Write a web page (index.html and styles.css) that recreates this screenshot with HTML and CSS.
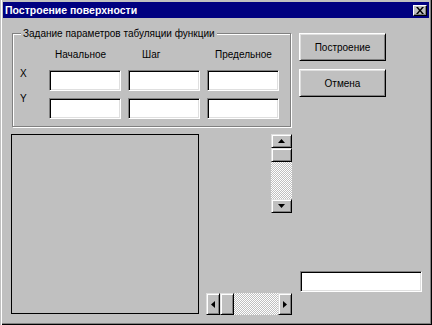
FILE: index.html
```html
<!DOCTYPE html>
<html lang="ru">
<head>
<meta charset="utf-8">
<title>Построение поверхности</title>
<link rel="stylesheet" href="styles.css">
</head>
<body>
<div class="window">
  <div class="titlebar">
    <span class="title">Построение поверхности</span>
    <button class="close" aria-label="Закрыть"><svg width="8" height="7" viewBox="0 0 8 7"><path d="M0 0h2l2 2.4L6 0h2L5 3.5 8 7H6L4 4.6 2 7H0l3-3.5z" fill="#000"/></svg></button>
  </div>
  <div class="client">
    <div class="left">
      <div class="group">
        <span class="legend">Задание параметров табуляции функции</span>
        <div class="grid">
          <span></span>
          <span class="hdr h1">Начальное</span>
          <span class="hdr h2">Шаг</span>
          <span class="hdr h3">Предельное</span>
          <span class="lbl lx">X</span>
          <input class="field">
          <input class="field">
          <input class="field">
          <span class="lbl ly">Y</span>
          <input class="field">
          <input class="field">
          <input class="field">
        </div>
      </div>
      <div class="lower">
        <div class="picture"></div>
        <div class="scrolls">
          <div class="vscroll">
            <div class="sbtn"><svg width="7" height="4" viewBox="0 0 7 4"><path d="M3.5 0L7 4H0z" fill="#000"/></svg></div>
            <div class="sbtn"></div>
            <div class="track"></div>
            <div class="sbtn"><svg width="7" height="4" viewBox="0 0 7 4"><path d="M0 0h7L3.5 4z" fill="#000"/></svg></div>
          </div>
          <div class="hscroll">
            <div class="sbtn"><svg width="4" height="7" viewBox="0 0 4 7"><path d="M0 3.5L4 0v7z" fill="#000"/></svg></div>
            <div class="sbtn"></div>
            <div class="track"></div>
            <div class="sbtn"><svg width="4" height="7" viewBox="0 0 4 7"><path d="M0 0l4 3.5L0 7z" fill="#000"/></svg></div>
          </div>
        </div>
      </div>
    </div>
    <div class="right">
      <button class="btn">Построение</button>
      <button class="btn">Отмена</button>
      <input class="field result">
    </div>
  </div>
</div>
</body>
</html>
```

FILE: styles.css
```css
* { box-sizing: border-box; }
html, body { margin: 0; padding: 0; background: #c0c0c0; }
body {
  font-family: "Liberation Sans", Arial, sans-serif;
  font-size: 10px;
  line-height: 13px;
  color: #000;
}
.window {
  width: 432px;
  height: 325px;
  background: #c0c0c0;
  display: flex;
  flex-direction: column;
  padding: 0 3px 3px 3px;
  box-shadow: inset 1px 0 #c0c0c0, inset 2px 0 #fff, inset -1px -1px #000, inset -2px -2px #808080;
}
.titlebar {
  height: 16px;
  margin-top: 2px;
  background: #000080;
  display: flex;
  align-items: center;
  justify-content: space-between;
  padding: 0 2px 0 2px;
}
.title {
  color: #fff;
  font-weight: bold;
  font-size: 10.5px;
  line-height: 13px;
}
.close {
  width: 14px;
  height: 11px;
  padding: 0;
  margin: 0;
  background: #c0c0c0;
  border: 1px solid;
  border-color: #fff #000 #000 #fff;
  box-shadow: inset -1px -1px #808080;
  display: flex;
  align-items: center;
  justify-content: center;
}
.client {
  flex: 1;
  display: flex;
  padding-left: 8px;
}
.left {
  width: 281px;
  display: flex;
  flex-direction: column;
  padding-bottom: 7px;
}
.group {
  position: relative;
  margin: 15px 0 0 1px;
  width: 279px;
  border: 1px solid #808080;
  box-shadow: inset 1px 1px #fff, 1px 1px #fff;
  padding: 6px 0 7px 6px;
}
.legend {
  position: absolute;
  top: -7px;
  left: 8px;
  padding: 0 2px;
  background: #c0c0c0;
  white-space: nowrap;
}
.grid {
  display: grid;
  grid-template-columns: 23px 72px 72px 72px;
  grid-template-rows: 23px 21px 21px;
  column-gap: 7px;
  row-gap: 7px;
}
.hdr { padding-top: 8px; white-space: nowrap; }
.h1 { padding-left: 6px; }
.h2 { padding-left: 14px; }
.h3 { padding-left: 8px; }
.lbl { align-self: start; padding-left: 1px; }
.lx { margin-top: -3px; }
.ly { margin-top: -6px; }
.field {
  width: 72px;
  height: 21px;
  margin: 0;
  padding: 0 3px;
  background: #fff;
  border: 1px solid;
  border-color: #808080 #fff #fff #808080;
  box-shadow: inset 1px 1px #000, inset -1px -1px #dfdfdf;
  font: inherit;
  outline: none;
}
.lower {
  margin-top: 7px;
  height: 181px;
  display: flex;
}
.picture {
  width: 188px;
  height: 180px;
  border: 1px solid #000;
}
.scrolls {
  margin-left: 7px;
  width: 86px;
  display: flex;
  flex-direction: column;
  align-items: flex-end;
  justify-content: space-between;
}
.vscroll {
  width: 21px;
  height: 79px;
  display: flex;
  flex-direction: column;
}
.hscroll {
  width: 86px;
  height: 22px;
  display: flex;
}
.vscroll .sbtn { height: 14px; width: 21px; }
.hscroll .sbtn { width: 14px; height: 22px; }
.sbtn {
  flex: none;
  background: #c0c0c0;
  border: 1px solid;
  border-color: #dfdfdf #000 #000 #dfdfdf;
  box-shadow: inset 1px 1px #fff, inset -1px -1px #808080;
  display: flex;
  align-items: center;
  justify-content: center;
}
.track {
  flex: 1;
  background-image: conic-gradient(#fff 25%, #c0c0c0 0 50%, #fff 0 75%, #c0c0c0 0);
  background-size: 2px 2px;
}
.right {
  flex: 1;
  margin-left: 7px;
  padding-top: 15px;
  display: flex;
  flex-direction: column;
  align-items: flex-start;
}
.btn {
  width: 87px;
  height: 28px;
  margin: 0 0 8px 0;
  padding: 0;
  background: #c0c0c0;
  border: 1px solid;
  border-color: #fff #000 #000 #fff;
  box-shadow: inset 1px 1px #dfdfdf, inset -1px -1px #808080;
  font: inherit;
  color: #000;
}
.result {
  width: 122px;
  margin: auto 0 30px 1px;
}
```
